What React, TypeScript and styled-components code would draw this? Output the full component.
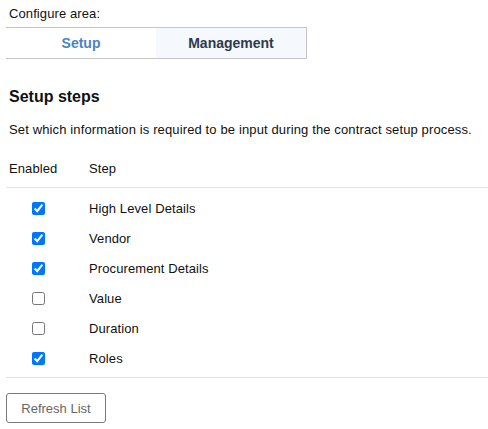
import React, { useState } from "react";
import styled, { createGlobalStyle } from "styled-components";

const GlobalStyle = createGlobalStyle`
  body {
    margin: 0;
    background: #fff;
    font-family: "Liberation Sans", Arial, sans-serif;
    font-size: 13px;
    letter-spacing: 0.1px;
    color: #111;
  }
`;

const initialSteps = [
  { name: "High Level Details", enabled: true },
  { name: "Vendor", enabled: true },
  { name: "Procurement Details", enabled: true },
  { name: "Value", enabled: false },
  { name: "Duration", enabled: false },
  { name: "Roles", enabled: true },
];

function App(): React.ReactElement {
  const [tab, setTab] = useState("setup");
  const [steps, setSteps] = useState(initialSteps);

  const toggle = (index: number) =>
    setSteps((prev) =>
      prev.map((step, i) => (i === index ? { ...step, enabled: !step.enabled } : step))
    );

  return (
    <Page>
      <GlobalStyle />
      <AreaLabel>Configure area:</AreaLabel>
      <Tabs>
        <Tab $active={tab === "setup"} onClick={() => setTab("setup")}>
          Setup
        </Tab>
        <Tab $active={tab === "management"} onClick={() => setTab("management")}>
          Management
        </Tab>
      </Tabs>

      <Heading>Setup steps</Heading>
      <Description>
        Set which information is required to be input during the contract setup process.
      </Description>

      <StepTable>
        <HeaderRow>
          <HeaderCell>Enabled</HeaderCell>
          <HeaderCell>Step</HeaderCell>
        </HeaderRow>
        <StepBody>
          {steps.map((step, i) => (
            <StepRow key={step.name}>
              <CheckCell>
                <Checkbox type="checkbox" checked={step.enabled} onChange={() => toggle(i)} />
              </CheckCell>
              <StepName>{step.name}</StepName>
            </StepRow>
          ))}
        </StepBody>
      </StepTable>

      <RefreshButton type="button">Refresh List</RefreshButton>
    </Page>
  );
}

const Page = styled.div`
  padding: 6px 0 0 6px;
`;

const AreaLabel = styled.div`
  padding-left: 3px;
  line-height: 15px;
`;

const Tabs = styled.div`
  display: flex;
  width: 300px;
  margin-top: 6px;
  border-top: 1px solid #c6c6c6;
  border-bottom: 1px solid #c6c6c6;
  border-right: 1px solid #c6c6c6;
`;

const Tab = styled.div<{ $active: boolean }>`
  flex: 1;
  height: 30px;
  display: flex;
  align-items: center;
  justify-content: center;
  font-size: 14px;
  font-weight: bold;
  letter-spacing: 0;
  cursor: pointer;
  background: ${({ $active }) => ($active ? "#fff" : "#f5f8fd")};
  color: ${({ $active }) => ($active ? "#4a84c2" : "#2d3b4a")};
`;

const Heading = styled.h2`
  margin: 29px 0 0;
  padding-left: 3px;
  font-size: 16px;
  line-height: 18px;
  font-weight: bold;
  letter-spacing: 0;
`;

const Description = styled.p`
  margin: 16px 0 0;
  padding-left: 3px;
  line-height: 15px;
  letter-spacing: 0.13px;
`;

const StepTable = styled.div`
  margin-top: 24px;
  border-bottom: 1px solid #e2e2e2;
`;

const HeaderRow = styled.div`
  display: grid;
  grid-template-columns: 80px 1fr;
  padding-bottom: 11px;
  border-bottom: 1px solid #e2e2e2;
`;

const HeaderCell = styled.div`
  padding-left: 3px;
  line-height: 15px;
`;

const StepBody = styled.div`
  padding: 5px 0 4px;
`;

const StepRow = styled.div`
  display: grid;
  grid-template-columns: 80px 1fr;
  align-items: center;
  height: 30px;
`;

const CheckCell = styled.div`
  display: flex;
  align-items: center;
  padding-left: 26px;
`;

const Checkbox = styled.input`
  width: 13px;
  height: 13px;
  margin: 0;
`;

const StepName = styled.div`
  padding-left: 3px;
`;

const RefreshButton = styled.button`
  margin-top: 15px;
  width: 100px;
  height: 30px;
  background: #fff;
  border: 1px solid #7a7a7a;
  border-radius: 3px;
  color: #666;
  font-family: "Liberation Sans", Arial, sans-serif;
  font-size: 13px;
  letter-spacing: 0;
  cursor: pointer;
`;

export default App;
